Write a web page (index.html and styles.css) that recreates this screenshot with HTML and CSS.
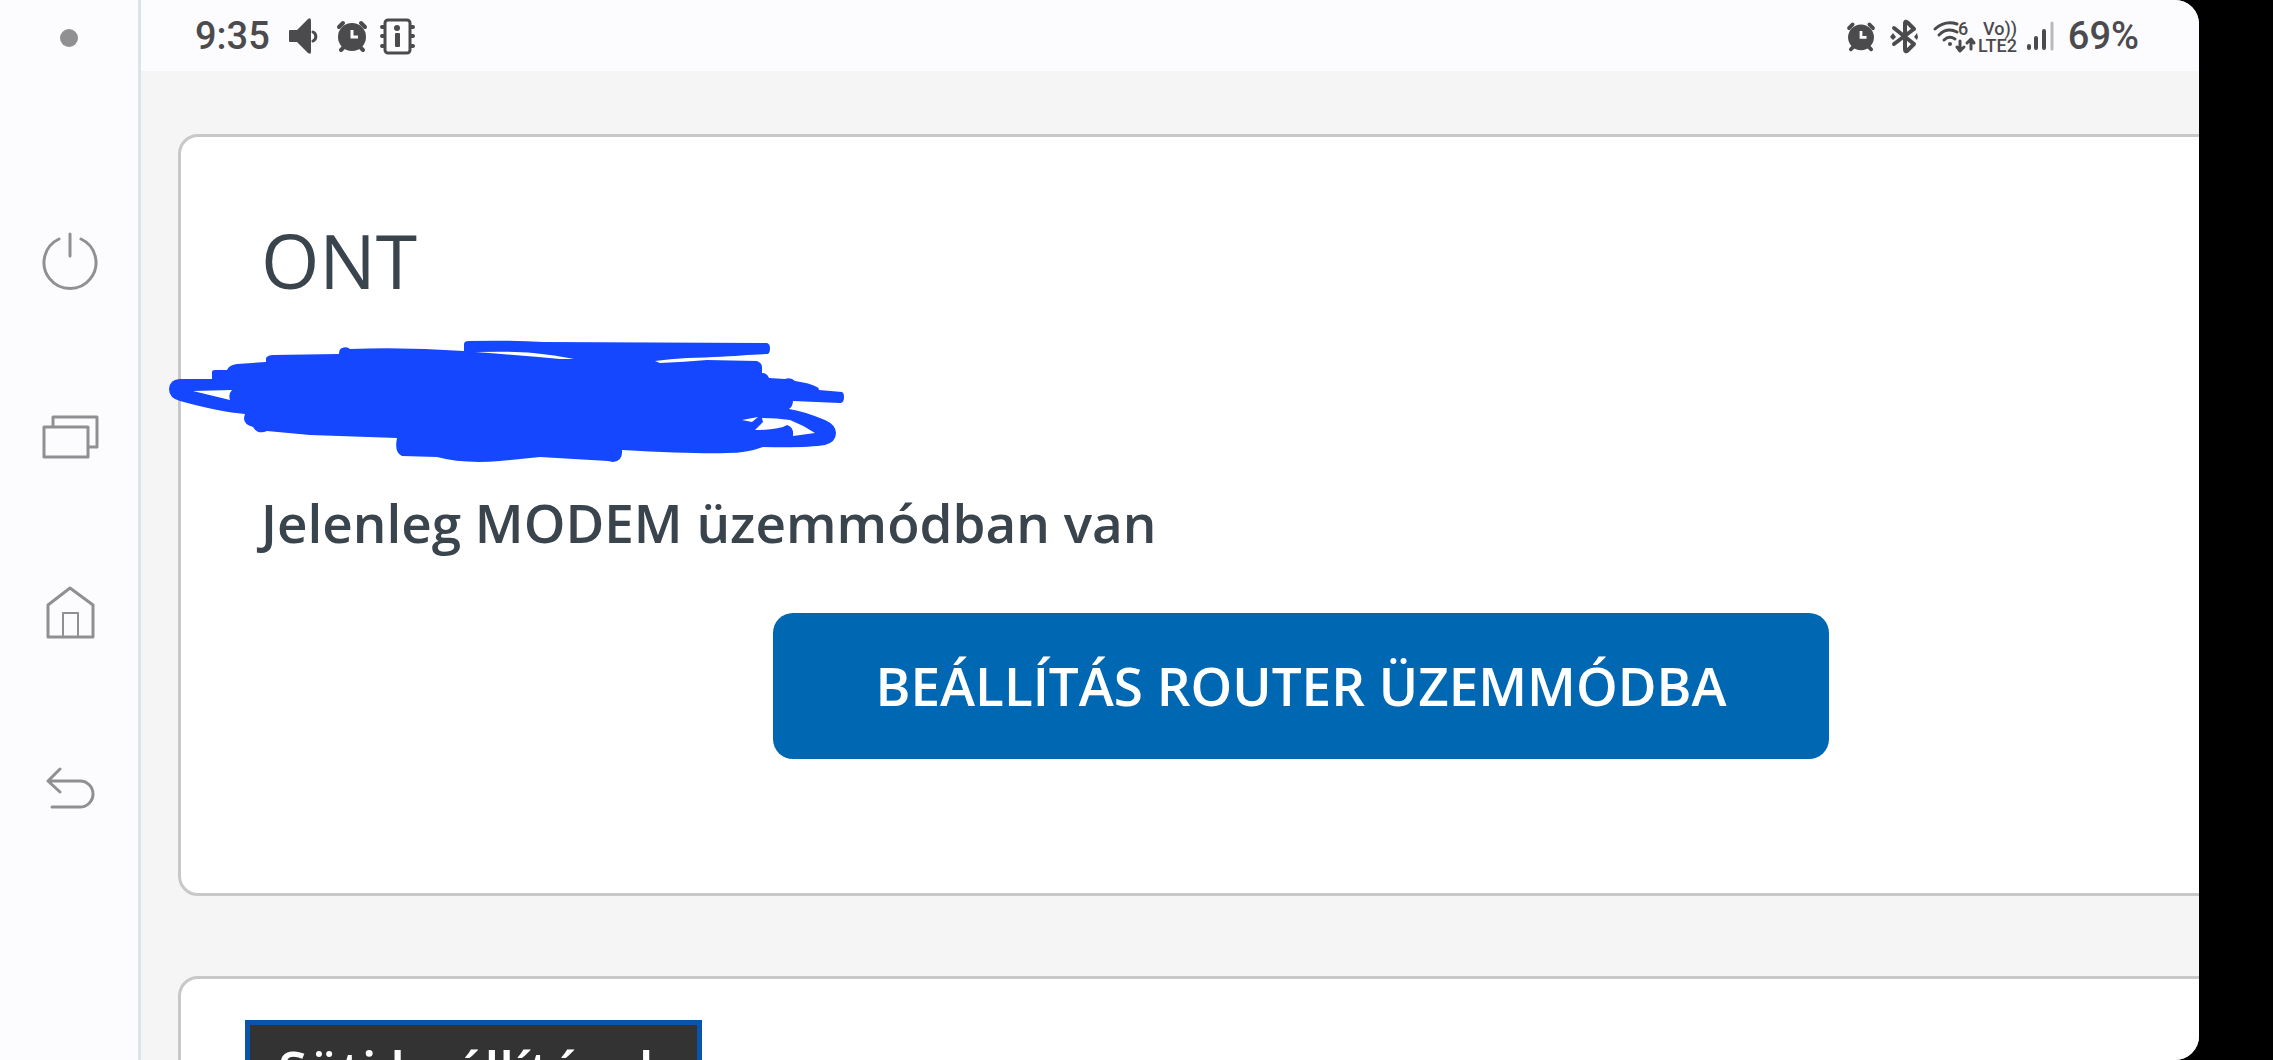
FILE: index.html
```html
<!DOCTYPE html>
<html lang="hu">
<head>
    <meta charset="UTF-8">
    <meta name="viewport" content="width=device-width, initial-scale=1.0">
    <title>ONT</title>
    <link rel="stylesheet" href="styles.css">
</head>
<body>
    <div class="screen">
        <nav class="sidebar">
            <div class="dot-area"><span class="dot"></span></div>
            <button class="nav-button" aria-label="Power">
                <svg class="nav-icon" viewBox="0 0 60 60"><path d="M20 8A26 26 0 1 0 42 8M31 3V25"/></svg>
            </button>
            <button class="nav-button" aria-label="Recents">
                <svg class="nav-icon" viewBox="0 0 60 60"><path d="M5 20H49V50H5ZM14 20V10H58V40H49"/></svg>
            </button>
            <button class="nav-button" aria-label="Home">
                <svg class="nav-icon" viewBox="0 0 60 60"><path d="M31 5L9 22V54H54V22Z"/><path class="thin" d="M24 54V30H39V54"/></svg>
            </button>
            <button class="nav-button" aria-label="Back">
                <svg class="nav-icon" viewBox="0 0 60 60"><path d="M21 10L9 22L21 33M9 22H41A13 13 0 0 1 41 48H13"/></svg>
            </button>
        </nav>

        <div class="content">
            <header class="status-bar">
                <div class="status-group">
                    <span class="clock time">9:35</span>
                    <svg width="36" height="40" viewBox="0 0 36 40">
                        <path class="fill" d="M2 14H9L20 3Q23 1 23 5V36Q23 39 20 37L9 26H2Q1 26 1 25V15Q1 14 2 14Z"/>
                        <path class="line" d="M25 16A5 5 0 0 1 25 25"/>
                    </svg>
                    <svg width="32" height="40" viewBox="0 0 32 40">
                        <circle class="fill" cx="16" cy="21" r="14"/>
                        <path class="line thick" d="M3 11L7 7M25 7L29 11M5 34L9 30M27 34L23 30"/>
                        <path class="hands" d="M16 14V21H22"/>
                    </svg>
                    <svg width="36" height="40" viewBox="2 0 36 40">
                        <rect class="line" x="7" y="4" width="25" height="33" rx="3"/>
                        <path class="line thick" d="M4 11H6M4 20H6M4 30H6M33 11H35M33 20H35M33 30H35"/>
                        <circle class="fill" cx="19" cy="12" r="3"/>
                        <rect class="fill" x="17" y="17" width="5" height="14" rx="1"/>
                    </svg>
                </div>
                <div class="status-group">
                    <svg width="30" height="37" viewBox="0 0 32 40">
                        <circle class="fill" cx="16" cy="22" r="14"/>
                        <path class="line thick" d="M3 12L7 8M25 8L29 12M5 35L9 31M27 35L23 31"/>
                        <path class="hands" d="M16 15V22H22"/>
                    </svg>
                    <svg width="32" height="40" viewBox="1 0 32 40">
                        <path class="line thick" d="M7 12L27 28L21 34Q18 37 18 33V8Q18 4 21 7L27 13L7 28"/>
                        <path class="fill" d="M3 21L6 17L9 21L6 24ZM27 21L30 17L31 21L30 24Z"/>
                    </svg>
                    <svg width="124" height="40" viewBox="0 0 124 40">
                        <path class="line" d="M3 13Q13 4 25 8M7 19Q15 11 25 16M12 24Q17 19 23 23"/>
                        <circle class="fill" cx="18" cy="28" r="2"/>
                        <text class="tiny" x="26" y="19">6</text>
                        <path class="line" d="M28 25V34M25 31L28 35L32 31M39 33V24M35 27L39 23L42 27"/>
                        <text class="tiny" x="51" y="19">Vo))</text>
                        <text class="tiny" x="46" y="36">LTE2</text>
                        <path class="line thick" d="M97 30V32M104 22V32M112 15V32"/>
                        <path class="line weak" d="M120 7V33"/>
                    </svg>
                    <span class="clock">69%</span>
                </div>
            </header>

            <main class="page">
                <section class="card device">
                    <h1>ONT</h1>
                    <svg class="scribble" width="690" height="132" viewBox="0 0 690 132" fill-rule="evenodd">
                        <path d="M4 54Q5 44 15 44L47 44V37Q47 35 50 35H62Q64 30 72 29L101 27V23Q103 20 108 20L174 19Q174 14 177 13Q182 11 185 14Q240 12 299 16V9Q299 6 304 6Q345 5 378 7L602 8Q605 9 605 13Q605 19 602 19L582 20Q560 22 522 23Q505 24 490 26L495 28Q520 27 542 25L592 26Q597 28 597 32V38Q602 38 604 43L620 44Q626 42 630 46Q645 48 652 52Q654 53 654 55L677 57Q679 58 679 62Q679 68 675 68L628 66Q628 71 624 74Q638 76 660 85Q671 90 671 98Q671 107 660 110Q642 113 598 112Q582 118 562 118Q530 119 457 115Q458 126 448 127L443 126L375 122L335 126Q298 129 272 122L237 121Q229 118 232 103L145 100L102 96Q93 100 88 92Q76 89 80 79Q55 77 15 66Q4 63 4 54Z
                            M28 56L67 55Q63 59 65 65Z
                            M310 17Q350 16 368 18Q390 20 409 24H395Q350 20 310 17Z
                            M577 85L593 82L587 87Z
                            M597 83Q612 83 625 85Q638 90 650 98L628 101Q629 92 622 90Q614 95 590 95L598 87Z"/>
                    </svg>
                    <p class="mode">Jelenleg MODEM üzemmódban van</p>
                    <button class="mode-button">BEÁLLÍTÁS ROUTER ÜZEMMÓDBA</button>
                </section>
                <section class="card cookies">
                    <button class="cookie-button">Süti beállítások</button>
                </section>
            </main>
        </div>
    </div>
</body>
</html>
```
FILE: styles.css
```css
* {
    box-sizing: border-box;
}
body {
    margin: 0;
    background-color: black;
    font-family: "Open Sans", sans-serif;
    color: #3a444c;
}
button {
    font-family: inherit;
    border: none;
    cursor: pointer;
}
.screen {
    display: flex;
    height: 100vh;
    margin-right: 74px;
    border-radius: 0 24px 24px 0;
    overflow: hidden;
    background-color: #f5f5f5;
}

/* navigation strip */
.sidebar {
    flex: 0 0 141px;
    display: flex;
    flex-direction: column;
    background-color: #fcfcff;
    border-right: 3px solid #dde3e8;
}
.dot-area {
    flex: 0 0 173px;
    padding-top: 29px;
}
.dot {
    display: block;
    width: 18px;
    height: 18px;
    margin: 0 auto;
    border-radius: 50%;
    background-color: #909092;
}
.nav-button {
    flex: 0 0 176px;
    display: flex;
    justify-content: center;
    align-items: center;
    padding: 0;
    background: none;
}
.nav-icon {
    width: 60px;
    height: 60px;
    fill: none;
    stroke: #909092;
    stroke-width: 3;
    stroke-linejoin: round;
    stroke-linecap: round;
}
.nav-icon .thin {
    stroke-width: 2;
}

/* status bar */
.content {
    flex: 1;
    min-width: 0;
}
.status-bar {
    display: flex;
    justify-content: space-between;
    align-items: center;
    height: 71px;
    padding: 0 60px 0 54px;
    background-color: #fcfcff;
}
.status-group {
    display: flex;
    align-items: center;
    gap: 12px;
}
.clock {
    font-family: Roboto, sans-serif;
    font-size: 38px;
    font-weight: 500;
    line-height: 40px;
    color: #4b4b4d;
}
.time {
    padding-right: 6px;
}
.fill, .tiny {
    fill: #4b4b4d;
}
.line {
    fill: none;
    stroke: #4b4b4d;
    stroke-width: 3;
    stroke-linecap: round;
    stroke-linejoin: round;
}
.thick {
    stroke-width: 4;
}
.weak {
    stroke: #b9b9bb;
}
.hands {
    fill: none;
    stroke: #fcfcff;
    stroke-width: 3;
}
.tiny {
    font-family: Roboto, sans-serif;
    font-size: 18px;
    font-weight: 500;
}

/* page */
.page {
    padding: 63px 0 0 37px;
}
/* cards are wider than the screen and run off its right edge */
.card {
    margin-right: -225px;
    margin-bottom: 80px;
    border: 3px solid #c8c8c8;
    border-radius: 20px;
    background-color: white;
}
.device {
    padding: 73px 80px 134px;
}
h1 {
    margin: 0;
    font-size: 75px;
    font-weight: 400;
    line-height: 100px;
}
.scribble {
    display: block;
    margin: 25px 0 20px -96px;
    fill: #1447ff;
}
.mode {
    margin: 0;
    font-size: 53px;
    font-weight: 600;
    line-height: 72px;
}
.mode-button {
    display: block;
    margin: 54px auto 0;
    padding: 36px 103px;
    border-radius: 20px;
    background-color: #0067b3;
    color: white;
    font-size: 53px;
    font-weight: 600;
    line-height: 74px;
}
.cookies {
    padding: 41px 64px;
}
.cookie-button {
    padding: 8px 28px;
    border: 5px solid #0a55ab;
    background-color: #333;
    color: white;
    font-size: 53px;
    font-weight: 600;
    line-height: 74px;
}
```
